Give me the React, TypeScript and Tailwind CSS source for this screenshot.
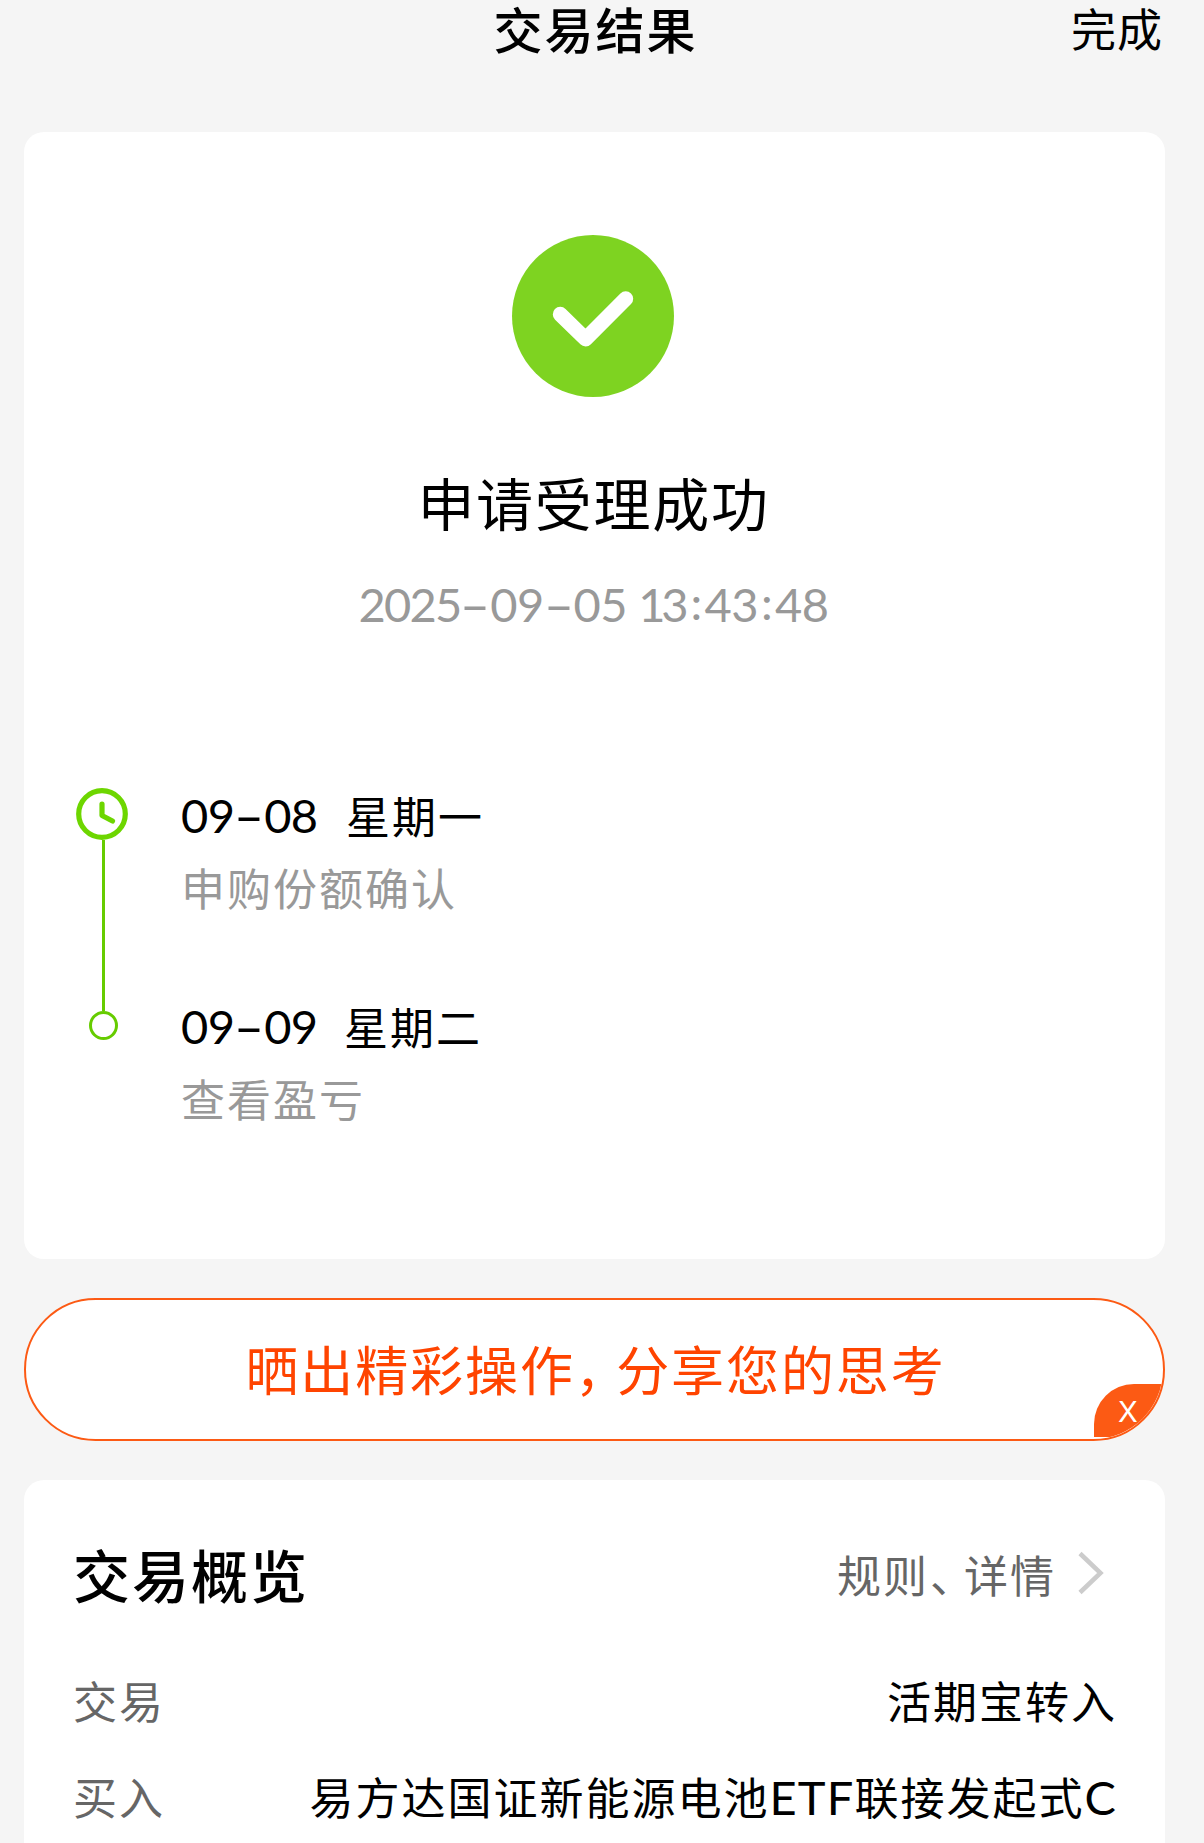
import React from "react";

// Expected progress of the order
const steps = [
  { id: 1, month: "09", day: "08", weekday: "星期一", label: "申购份额确认", dateWidth: "w-[165px]" },
  { id: 2, month: "09", day: "09", weekday: "星期二", label: "查看盈亏", dateWidth: "w-[163px]" },
];

const Dash = () => <span className="ml-[6px] mr-[7px] inline-block scale-x-[1.8]">-</span>;

const Colon = () => <span className="relative top-[-2px] mx-[3px]">:</span>;

const SuccessIcon = () => (
  <svg className="h-[162px] w-[162px]" viewBox="0 0 162 162" fill="none">
    <circle cx="81" cy="81" r="81" fill="#7ED321" />
    <path d="M48.3 79.3L73.6 104L113.7 63.7" stroke="#fff" strokeWidth="15" strokeLinecap="round" strokeLinejoin="round" />
  </svg>
);

const ClockIcon = () => (
  <svg className="h-[52px] w-[52px]" viewBox="0 0 52 52" fill="none" stroke="#6DD600" strokeWidth="5.2">
    <circle cx="26" cy="26" r="23.3" />
    <path d="M26 16V27.5L36.5 33" strokeLinecap="round" strokeLinejoin="round" />
  </svg>
);

const Header = () => (
  <header className="flex h-[132px] items-start pl-6 pr-[39px]">
    <div className="flex-1" />
    <h1 className="ml-[2px] text-[49px] font-medium leading-[55px] tracking-[2px]">交易结果</h1>
    <div className="flex flex-1 justify-end">
      <button className="mr-[2px] text-[45px] leading-[56px] tracking-[1px]">完成</button>
    </div>
  </header>
);

const ResultCard = () => (
  <section className="flex h-[1127px] flex-col items-center rounded-[20px] bg-white pt-[103px]">
    <div className="mr-[3px]">
      <SuccessIcon />
    </div>
    <h2 className="mt-[62px] mr-[2px] text-[57px] leading-[84px] tracking-[1.7px]">申请受理成功</h2>
    <p className="mt-[28px] mr-[2px] font-['Lato',sans-serif] text-[47px] leading-[66px] tracking-[-0.6px] text-[#999999]">
      <span className="tracking-[-1.8px]">2025</span><Dash />09<Dash />05{" "}
      <span className="mr-[3px] tracking-[-4.2px]">13</span><Colon />43<Colon />48
    </p>

    <div className="mt-[151px] flex w-full pl-[52px]">
      <div className="flex w-[54px] flex-col items-center">
        <div className="mr-[2px]">
          <ClockIcon />
        </div>
        <div className="ml-px h-[171px] w-[3px] bg-[#66CC00]" />
        <div className="ml-px h-[29px] w-[29px] rounded-full border-[3px] border-[#66CC00]" />
      </div>
      <ul className="mt-[-3px] ml-[51px]">
        {steps.map((step) => (
          <li key={step.id} className="h-[211px]">
            <div className="flex text-[44px] leading-[60px] tracking-[2px]">
              <span className={`${step.dateWidth} font-['Lato',sans-serif] text-[47px] tracking-[-0.6px]`}>
                {step.month}<Dash />{step.day}
              </span>
              <span>{step.weekday}</span>
            </div>
            <p className="mt-[12px] text-[44px] leading-[60px] tracking-[2px] text-[#999999]">{step.label}</p>
          </li>
        ))}
      </ul>
    </div>
  </section>
);

const ShareBanner = () => (
  <section className="relative mt-[39px] flex h-[143px] justify-center overflow-hidden rounded-full border-2 border-[#FC5A14] bg-white">
    <p className="mt-[29px] ml-[2px] text-[53px] leading-[78px] tracking-[1.9px] text-[#FF4400]">
      晒出精彩操作<span className="mr-[13px] [font-feature-settings:'halt']">，</span>分享您的思考
    </p>
    <button className="absolute bottom-[2px] right-[-2px] flex h-[53px] w-[71px] justify-center rounded-tl-[40px] bg-[#FC5A14] pr-[3px] pt-[7px] font-['Inter',sans-serif] text-[29px] leading-[42px] text-white">
      X
    </button>
  </section>
);

const Overview = () => (
  <section className="mt-[39px] h-[363px] rounded-t-[20px] bg-white pl-[49px] pr-[49px] pt-[51px]">
    <div className="flex items-center justify-between">
      <h2 className="text-[57px] font-medium leading-[84px] tracking-[2px]">交易概览</h2>
      <a className="flex items-center text-[44px] leading-[66px] tracking-[2px] text-[#666666]">
        <span className="mt-[2px]">
          规则<span className="ml-[1px] mr-[10px] [font-feature-settings:'halt']">、</span>详情
        </span>
        <svg className="ml-[21px] mr-[11px] h-[44px] w-[28px]" viewBox="0 0 28 44" fill="none">
          <path d="M3 2.5L23.5 22L3 41.5" stroke="#CCCCCC" strokeWidth="4.5" />
        </svg>
      </a>
    </div>
    <dl className="mt-[52px] text-[44px] leading-[66px] tracking-[2px]">
      <div className="flex justify-between">
        <dt className="text-[#666666]">交易</dt>
        <dd className="mr-[-1px]">活期宝转入</dd>
      </div>
      <div className="mt-[30px] flex justify-between">
        <dt className="text-[#666666]">买入</dt>
        <dd>
          易方达国证新能源电池<span className="font-['Lato',sans-serif] tracking-[1.2px] text-[47px]">ETF</span>联接发起式
          <span className="font-['Lato',sans-serif] tracking-normal text-[47px]">C</span>
        </dd>
      </div>
    </dl>
  </section>
);

export default function App() {
  return (
    <div className="h-[1843px] w-[1204px] overflow-hidden bg-[#F5F5F5] font-['Noto_Sans_CJK_SC',sans-serif] text-black">
      <Header />
      <main className="pl-6 pr-[39px]">
        <ResultCard />
        <ShareBanner />
        <Overview />
      </main>
    </div>
  );
}
